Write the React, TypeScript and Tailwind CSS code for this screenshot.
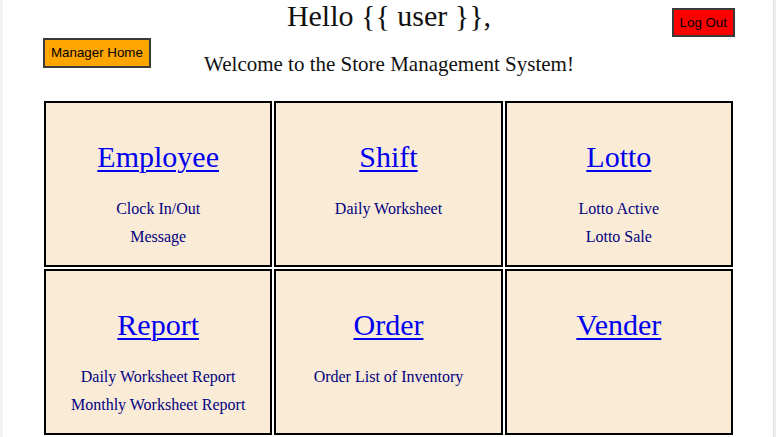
import React from "react";

type Card = { title: string; items: string[] };

const cards: Card[] = [
  { title: "Employee", items: ["Clock In/Out", "Message"] },
  { title: "Shift", items: ["Daily Worksheet"] },
  { title: "Lotto", items: ["Lotto Active", "Lotto Sale"] },
  { title: "Report", items: ["Daily Worksheet Report", "Monthly Worksheet Report"] },
  { title: "Order", items: ["Order List of Inventory"] },
  { title: "Vender", items: [] },
];

export default function App() {
  return (
    <div className="flex h-[437px] w-[776px] overflow-hidden bg-white" style={{ fontFamily: '"Liberation Serif", "Times New Roman", serif' }}>
      <div className="w-[3px] shrink-0 bg-[#f4f4f4]" />
      <main className="flex-1 flex flex-col">
        <header className="grid grid-cols-[1fr_auto_1fr] pl-[40px] pr-[38px] h-[101px]">
          <div className="flex items-start">
            <button
              className="mt-[38px] h-[30px] px-[6px] border-2 border-[#3a3a3a] bg-[#ffa500] text-black text-[13.33px] leading-none flex items-center"
              style={{ fontFamily: '"Liberation Sans", Arial, sans-serif' }}
            >
              Manager Home
            </button>
          </div>
          <div className="flex flex-col items-center text-black">
            <h1 className="text-[30px] leading-[32px] font-normal text-[#111]">Hello {"{{ user }}"},</h1>
            <p className="mt-[20px] text-[21px] leading-[24px] text-[#111]">Welcome to the Store Management System!</p>
          </div>
          <div className="flex items-start justify-end">
            <button
              className="mt-[8px] h-[29px] px-[6px] border-2 border-[#3a3a3a] bg-[#ff0000] text-black text-[13.33px] leading-none flex items-center"
              style={{ fontFamily: '"Liberation Sans", Arial, sans-serif' }}
            >
              Log Out
            </button>
          </div>
        </header>
        <section className="ml-[41px] mr-[40px] grid grid-cols-3 grid-rows-[166px_166px] gap-[2px]">
          {cards.map((c) => (
            <div key={c.title} className="border-2 border-black bg-[#faebd7] flex flex-col items-center pt-[37px]">
              <a href="#" className="text-[30px] leading-[34px] text-[#0000ee] underline decoration-[2px] underline-offset-[3px]">
                {c.title}
              </a>
              {c.items.length > 0 && (
                <div className="mt-[21px] flex flex-col items-center">
                  {c.items.map((it) => (
                    <span key={it} className="text-[16px] leading-[28px] text-[#000080]">
                      {it}
                    </span>
                  ))}
                </div>
              )}
            </div>
          ))}
        </section>
      </main>
      <div className="w-[3px] shrink-0 bg-[#ececec] border-l border-[#e0e0e0]" />
    </div>
  );
}
